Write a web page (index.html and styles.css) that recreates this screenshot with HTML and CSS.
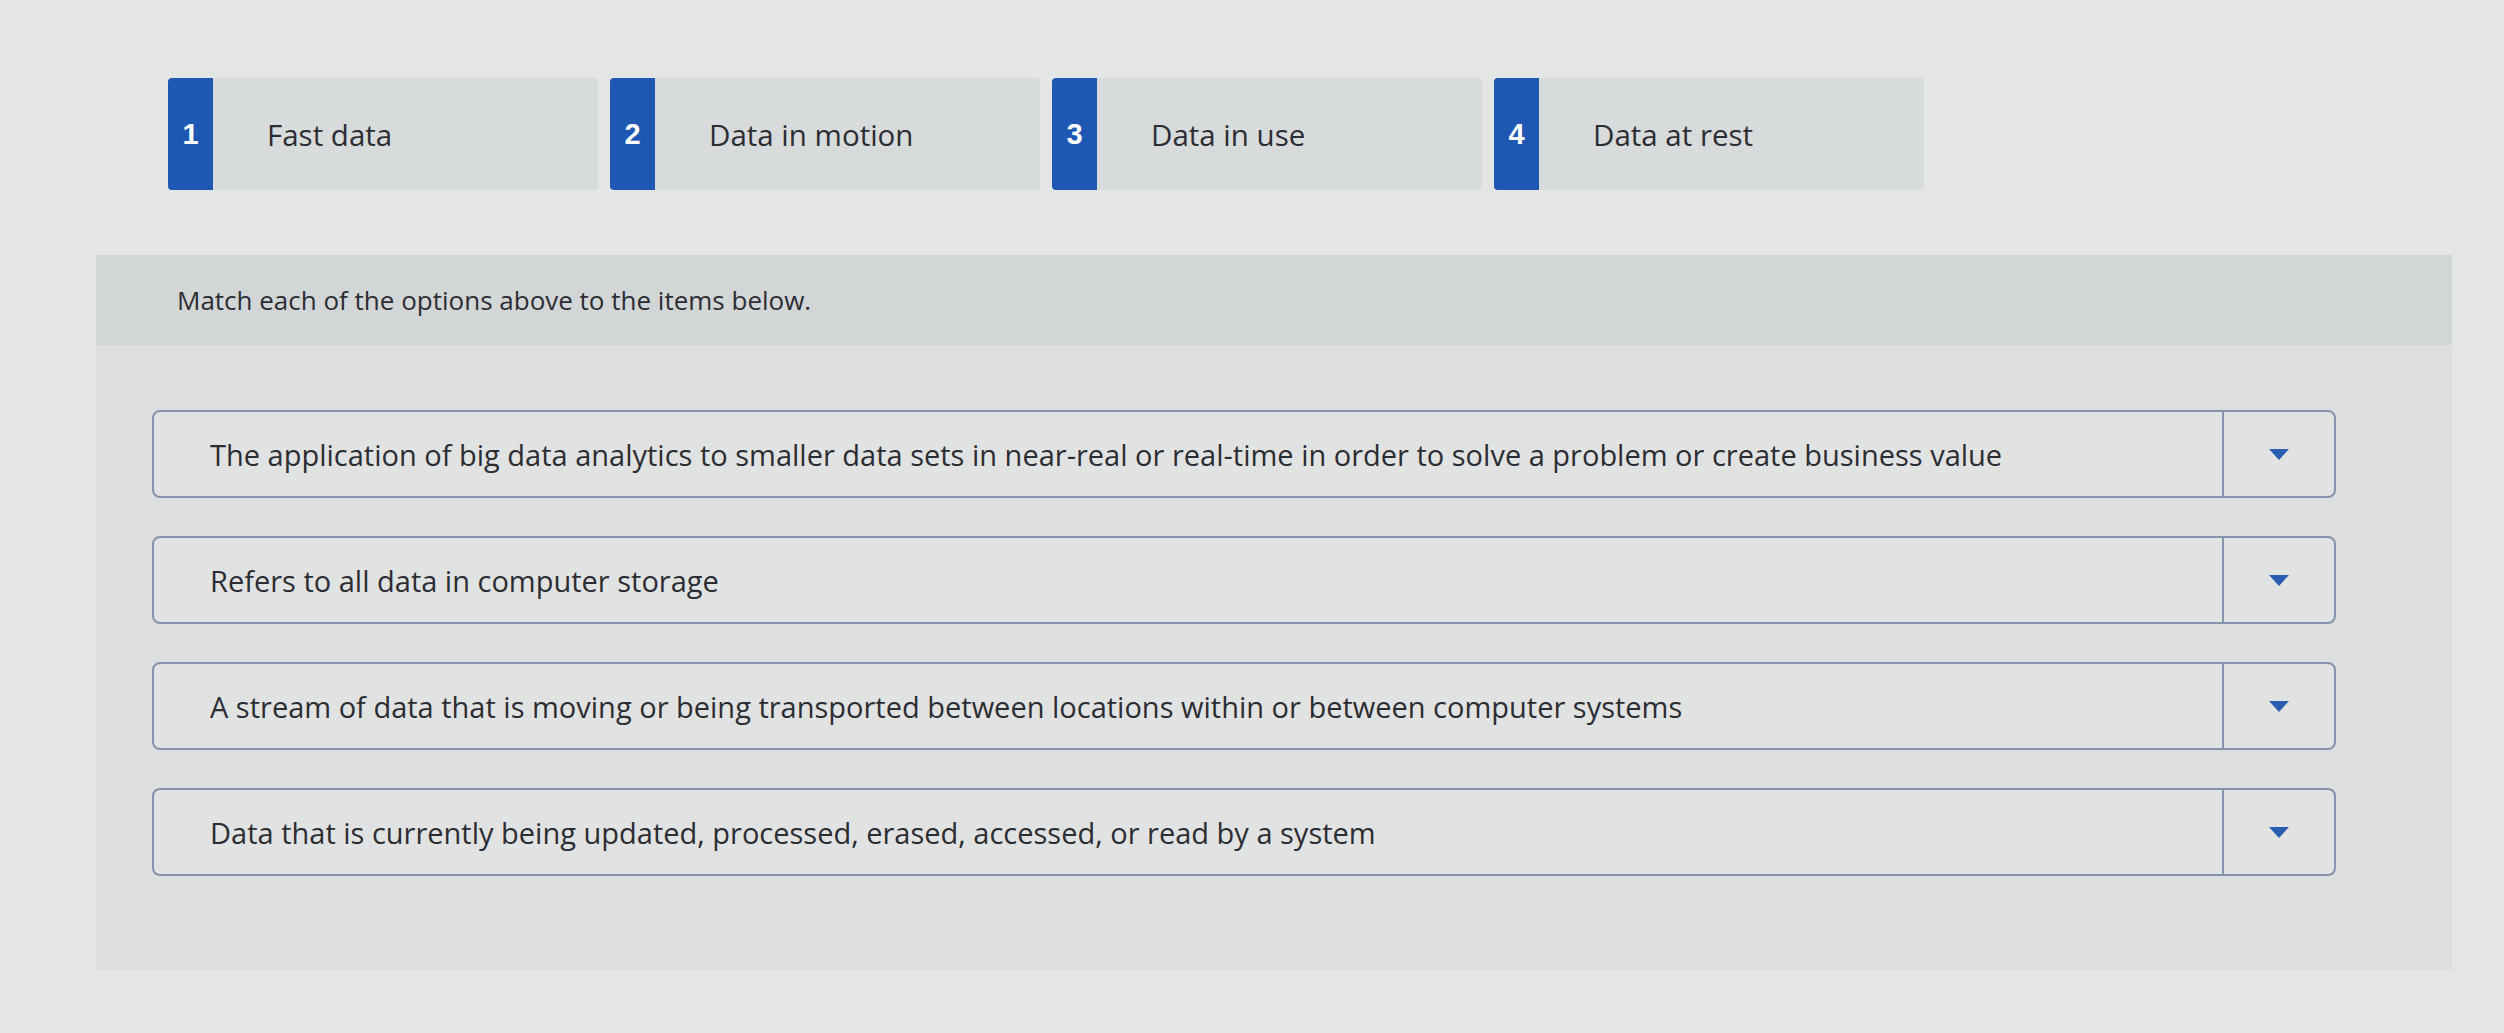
FILE: index.html
```html
<!DOCTYPE html>
<html lang="en">
<head>
<meta charset="utf-8">
<title>Matching question</title>
<link rel="stylesheet" href="styles.css">
</head>
<body>
<div class="page">
  <div class="options">
    <div class="tile"><div class="badge">1</div><div class="label">Fast data</div></div>
    <div class="tile"><div class="badge">2</div><div class="label">Data in motion</div></div>
    <div class="tile"><div class="badge">3</div><div class="label">Data in use</div></div>
    <div class="tile"><div class="badge">4</div><div class="label">Data at rest</div></div>
  </div>
  <div class="panel">
    <div class="panel-head">Match each of the options above to the items below.</div>
    <div class="items">
      <div class="item"><div class="item-text">The application of big data analytics to smaller data sets in near-real or real-time in order to solve a problem or create business value</div><div class="drop"><span class="arrow"></span></div></div>
      <div class="item"><div class="item-text">Refers to all data in computer storage</div><div class="drop"><span class="arrow"></span></div></div>
      <div class="item"><div class="item-text">A stream of data that is moving or being transported between locations within or between computer systems</div><div class="drop"><span class="arrow"></span></div></div>
      <div class="item"><div class="item-text">Data that is currently being updated, processed, erased, accessed, or read by a system</div><div class="drop"><span class="arrow"></span></div></div>
    </div>
  </div>
</div>
</body>
</html>
```
FILE: styles.css
```css
html, body {
  margin: 0;
  padding: 0;
}
body {
  background: #e3e6e5;
  font-family: "Open Sans", "Liberation Sans", sans-serif;
  color: #2c2d33;
  width: 2504px;
  height: 1033px;
  overflow: hidden;
}
.page {
  padding-top: 78px;
}
.options {
  display: flex;
  gap: 12px;
  padding-left: 168px;
}
.tile {
  display: flex;
  width: 430px;
  height: 112px;
}
.badge {
  width: 45px;
  background: #1f58b3;
  color: #ffffff;
  font-family: "Liberation Sans", Arial, sans-serif;
  font-weight: bold;
  font-size: 29px;
  display: flex;
  align-items: center;
  justify-content: center;
  border-radius: 4px 0 0 4px;
}
.label {
  flex: 1;
  background: #d8dbdb;
  display: flex;
  align-items: center;
  padding-left: 54px;
  font-size: 29.5px;
  border-radius: 0 4px 4px 0;
}
.panel {
  margin-top: 65px;
  margin-left: 96px;
  width: 2356px;
  height: 715px;
  background: #dcdfde;
}
.panel-head {
  height: 90px;
  background: #d3d6d6;
  display: flex;
  align-items: center;
  padding-left: 81px;
  font-size: 26px;
}
.items {
  display: flex;
  flex-direction: column;
  gap: 38px;
  padding: 65px 0 0 56px;
}
.item {
  width: 2184px;
  height: 88px;
  box-sizing: border-box;
  border: 2px solid #8593aa;
  border-radius: 8px;
  background: #e1e3e2;
  display: flex;
}
.item-text {
  flex: 1;
  display: flex;
  align-items: center;
  padding-left: 56px;
  font-size: 29px;
}
.drop {
  width: 110px;
  border-left: 2px solid #8593aa;
  display: flex;
  align-items: center;
  justify-content: center;
}
.arrow {
  width: 0;
  height: 0;
  border-left: 10px solid transparent;
  border-right: 10px solid transparent;
  border-top: 11px solid #2a5cb2;
}
```
